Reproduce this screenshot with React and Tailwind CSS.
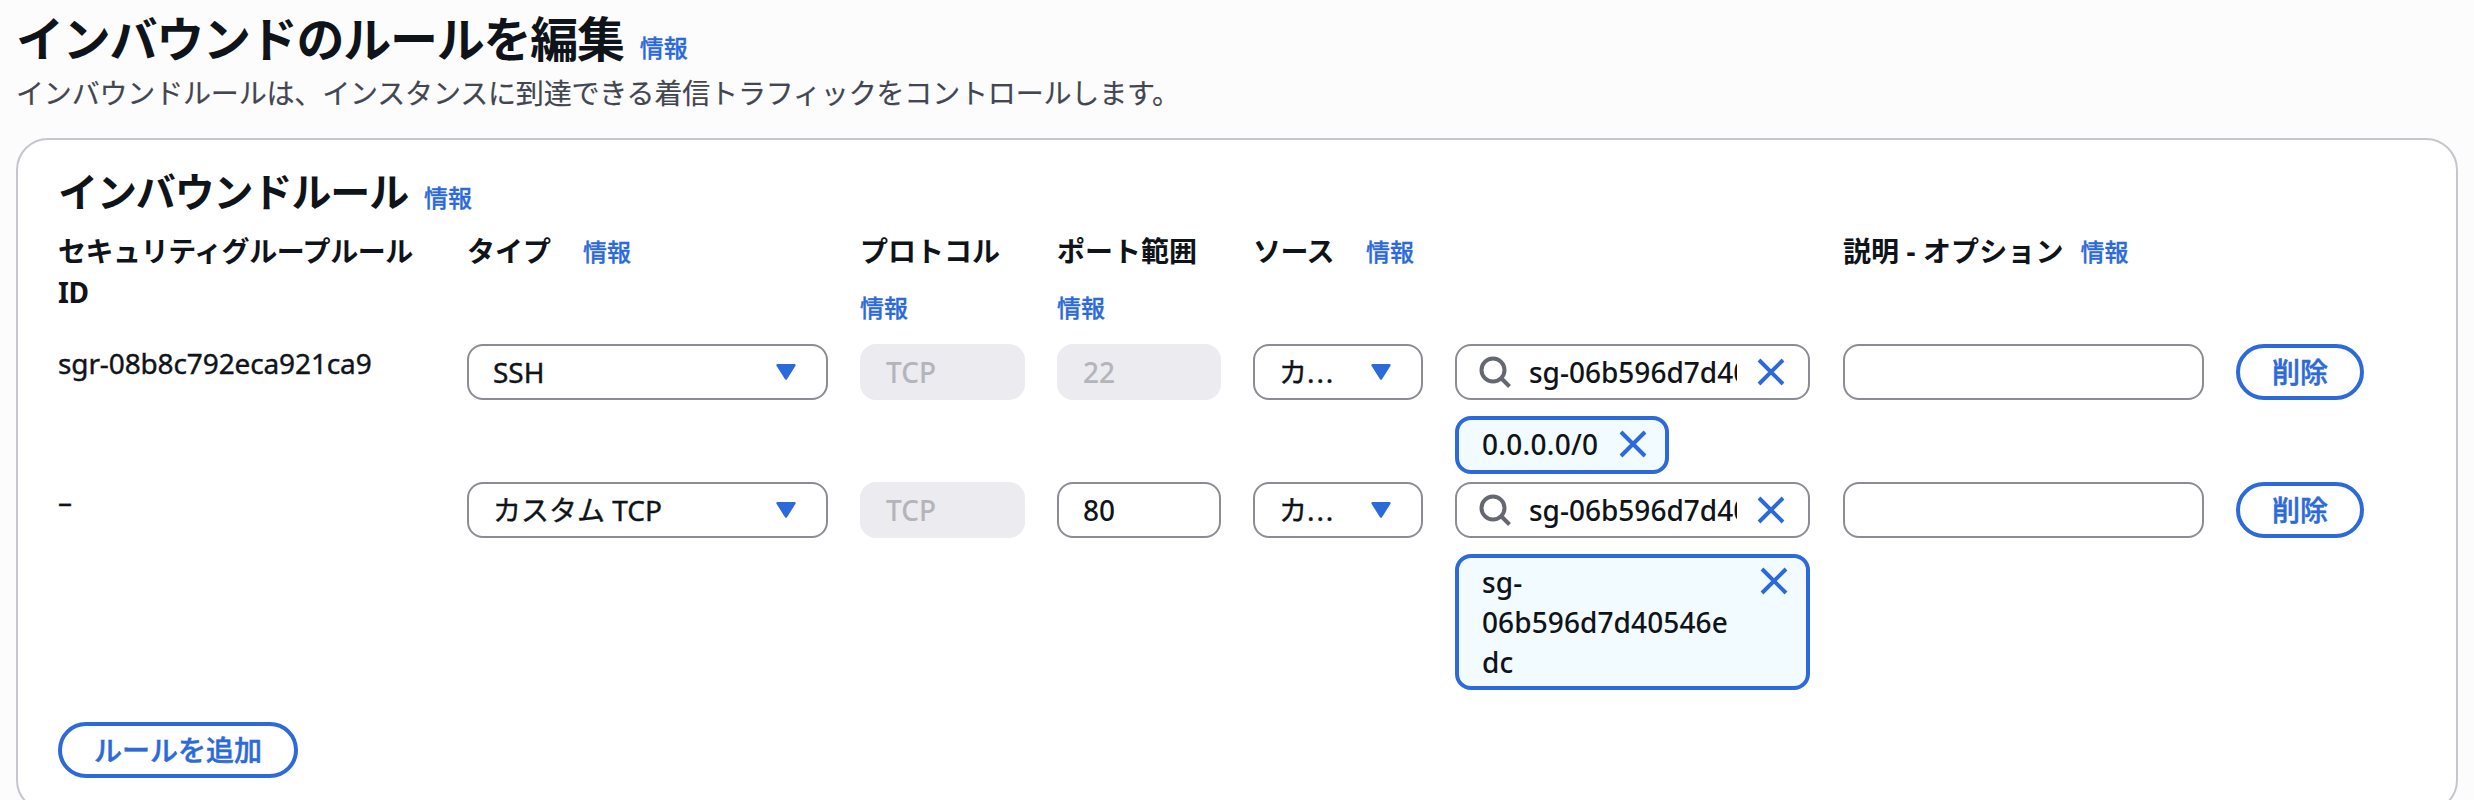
const Info = ({ className = "" }) => (
  <a
    className={`text-[24px] leading-[40px] font-medium tracking-normal text-[#2c6adb] [-webkit-text-stroke:0.3px] whitespace-nowrap ${className}`}
  >
    情報
  </a>
);

const CloseIcon = () => (
  <svg className="h-7 w-7 shrink-0" viewBox="0 0 28 28" fill="none" stroke="#2c6adb" strokeWidth="4">
    <path d="M2 2 26 26M26 2 2 26" />
  </svg>
);

const SearchIcon = () => (
  <svg className="h-8 w-8 shrink-0" viewBox="0 0 32 32" fill="none" stroke="#656871" strokeWidth="4">
    <circle cx="14" cy="14" r="11.5" />
    <path d="M22 22 30.5 30.5" />
  </svg>
);

const Caret = () => (
  <svg className="h-4 w-5 shrink-0" viewBox="0 0 20 16">
    <path d="M1.5 1.2h17L10 14.5Z" fill="#2c6adb" stroke="#2c6adb" strokeWidth="2.4" strokeLinejoin="round" />
  </svg>
);

const Select = ({ children }) => (
  <div className="flex h-14 items-center justify-between rounded-2xl border-2 border-[#8c8c94] bg-white pr-[30px] pl-6">
    <span className="-mt-px whitespace-nowrap [-webkit-text-stroke:0.4px]">{children}</span>
    <Caret />
  </div>
);

const Input = ({ value = "", disabled = false }) => (
  <div
    className={`flex h-14 items-center rounded-2xl border-2 px-6 font-medium ${
      disabled ? "border-[#ebebf0] bg-[#ebebf0] text-[#b4b4bb]" : "border-[#8c8c94] bg-white"
    }`}
  >
    <span>{value}</span>
  </div>
);

const SearchInput = ({ value }) => (
  <div className="flex h-14 w-[355px] items-center rounded-2xl border-2 border-[#8c8c94] bg-white pr-[25px] pl-[22px]">
    <SearchIcon />
    <div className="mr-[20px] ml-[18px] w-[208px] shrink-0 overflow-hidden leading-10 font-medium whitespace-nowrap">
      {value}
    </div>
    <CloseIcon />
  </div>
);

const Button = ({ children, className }) => (
  <button
    className={`flex h-14 items-center justify-center rounded-full border-4 border-[#2c6adb] bg-white pb-px font-medium text-[#2c6adb] [-webkit-text-stroke:0.5px] ${className}`}
  >
    {children}
  </button>
);

const Row = ({ id, type, port, portDisabled, chip, className }) => (
  <div className={`flex items-start ${className}`}>
    <div className="-mt-px w-[409px] leading-10 tracking-[-0.12px] [-webkit-text-stroke:0.4px]">{id}</div>
    <div className="flex gap-8">
      <div className="w-[361px]">
        <Select>{type}</Select>
      </div>
      <div className="w-[165px]">
        <Input value="TCP" disabled />
      </div>
      <div className="w-[164px]">
        <Input value={port} disabled={portDisabled} />
      </div>
      <div className="w-[170px]">
        <Select>
          カ<span className="tracking-[1.9px]">...</span>
        </Select>
      </div>
      <div className="flex w-[356px] flex-col items-start gap-4">
        <SearchInput value="sg-06b596d7d40546edc" />
        {chip}
      </div>
      <div className="w-[361px]">
        <Input />
      </div>
      <Button className="w-[128px]">削除</Button>
    </div>
  </div>
);

export default function App() {
  return (
    <div
      lang="ja"
      className="h-[800px] overflow-hidden bg-[#fcfcfd] px-4 font-['Noto_Sans','Noto_Sans_CJK_JP',sans-serif] text-[28px] leading-10 text-[#0f141a]"
    >
      <header className="pt-[10px]">
        <div className="flex h-[60px] items-center">
          <h1 className="-mt-0.5 text-[48px] leading-[60px] font-bold tracking-[-1.25px] whitespace-nowrap">
            インバウンドのルールを編集
          </h1>
          <Info className="ml-4 pt-4" />
        </div>
        <p className="mt-[3px] h-[41px] tracking-[-0.17px] text-[#424650] [-webkit-text-stroke:0.2px]">
          インバウンドルールは、インスタンスに到達できる着信トラフィックをコントロールします。
        </p>
      </header>

      <section className="mt-6 h-[674px] w-[2442px] rounded-[32px] border-2 border-[#c6c6cd] bg-white pt-[28px] pl-10">
        <div className="flex h-12 items-center">
          <h2 className="-mt-px text-[40px] leading-[48px] font-bold tracking-[-1.1px] whitespace-nowrap">
            インバウンドルール
          </h2>
          <Info className="ml-4 pt-3" />
        </div>

        <div className="mt-4 flex h-[112px] font-bold">
          <div className="w-[409px] pr-8 tracking-[-0.45px]">
            <div className="-mt-px h-[41px]">セキュリティグループルール</div>
            ID
          </div>
          <div className="flex gap-8">
            <div className="flex w-[361px]">
              <span className="-mt-px">タイプ</span>
              <Info className="ml-8" />
            </div>
            <div className="flex w-[165px] flex-col gap-4">
              <span className="-mt-px h-[41px]">プロトコル</span>
              <Info />
            </div>
            <div className="flex w-[164px] flex-col gap-4">
              <span className="-mt-px h-[41px]">ポート範囲</span>
              <Info />
            </div>
            <div className="flex w-[558px]">
              <span className="-mt-px tracking-[-0.5px]">ソース</span>
              <Info className="ml-8" />
            </div>
            <div className="flex w-[361px] whitespace-nowrap">
              <span className="-mt-px tracking-[0.1px]">説明 - オプション</span>
              <Info className="ml-[17px]" />
            </div>
          </div>
        </div>

        <Row
          id="sgr-08b8c792eca921ca9"
          type="SSH"
          port="22"
          portDisabled
          className="h-[138px]"
          chip={
            <div className="flex h-[58px] w-[214px] items-center justify-between rounded-2xl border-4 border-[#2c6adb] bg-[#f2fbff] pr-[18px] pl-[23px]">
              <span className="-mt-0.5 font-medium tracking-[0.3px]">0.0.0.0/0</span>
              <div className="-mt-0.5">
                <CloseIcon />
              </div>
            </div>
          }
        />
        <Row
          id="–"
          type="カスタム TCP"
          port="80"
          className="h-[240px]"
          chip={
            <div className="flex h-[136px] w-[355px] items-start justify-between rounded-2xl border-4 border-[#2c6adb] bg-[#f2fbff] pt-1 pr-[18px] pl-[23px]">
              <span className="font-medium tracking-[0.1px]">
                sg-
                <br />
                06b596d7d40546e
                <br />
                dc
              </span>
              <div className="pt-[5px]">
                <CloseIcon />
              </div>
            </div>
          }
        />
        <Button className="w-[240px]">ルールを追加</Button>
      </section>
    </div>
  );
}
